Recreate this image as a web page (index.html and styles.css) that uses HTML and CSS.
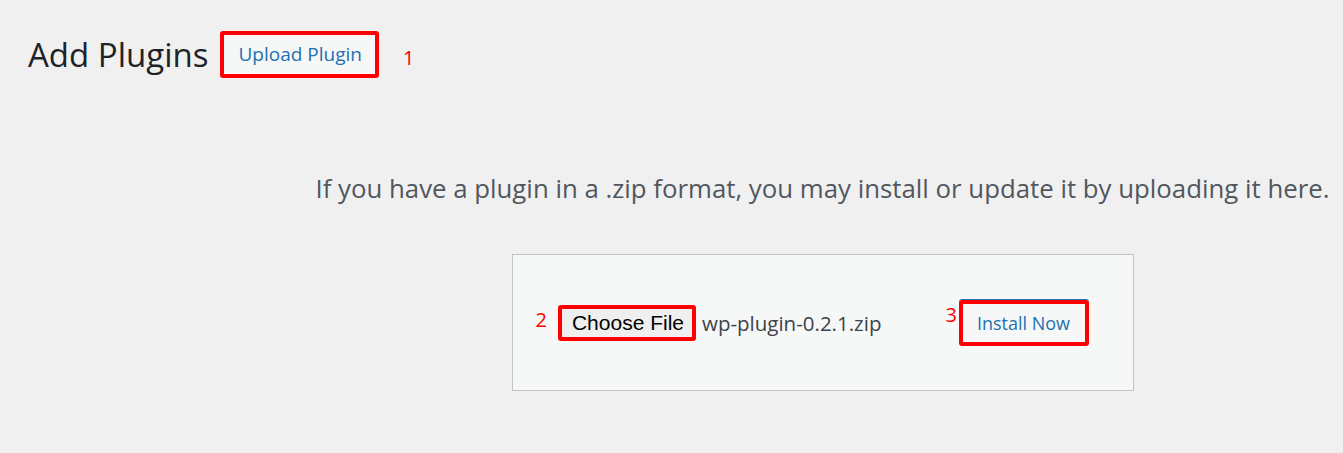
FILE: index.html
```html
<!DOCTYPE html>
<html lang="en">
<head>
    <meta charset="UTF-8">
    <title>Add Plugins</title>
    <link rel="stylesheet" href="styles.css">
</head>
<body>
    <div class="wrap">
        <div class="page-header">
            <h1>Add Plugins</h1>
            <span class="mark mark-upload"><a class="page-title-action" href="#">Upload Plugin</a></span>
            <span class="step step-1">1</span>
        </div>

        <div class="upload-plugin">
            <p class="install-help">If you have a plugin in a .zip format, you may install or update it by uploading it here.</p>
            <form class="upload-form">
                <span class="step step-2">2</span>
                <span class="mark mark-file"><span class="file-btn">Choose File</span></span>
                <span class="file-name">wp-plugin-0.2.1.zip</span>
                <span class="step step-3">3</span>
                <span class="mark mark-install"><span class="install-btn">Install Now</span></span>
            </form>
        </div>
    </div>
</body>
</html>
```

FILE: styles.css
```css
body {
    margin: 0;
    background: #f0f0f1;
    font-family: "Open Sans", "Noto Sans", sans-serif;
    color: #3c434a;
}
.wrap {
    width: 1343px;
    height: 453px;
    overflow: hidden;
}
.page-header {
    display: flex;
    align-items: center;
    padding: 31px 0 0 28px;
}
h1 {
    margin: 0 12px 0 0;
    font-size: 33px;
    font-weight: 400;
    color: #1d2327;
    line-height: 47px;
}
.mark {
    display: inline-flex;
    border: 4px solid #ff0000;
    border-radius: 3px;
}
.page-title-action {
    display: block;
    padding: 0 13px 0 14px;
    line-height: 39px;
    font-size: 19px;
    color: #2271b1;
    text-decoration: none;
    background: #f6f7f7;
}
.step {
    color: #ff0000;
    font-family: "Open Sans", sans-serif;
    font-size: 20px;
    line-height: 1;
}
.step-1 {
    margin: 6px 0 0 24px;
}
.upload-plugin {
    display: flex;
    flex-direction: column;
    align-items: center;
    padding-left: 302px;
    margin-top: 92px;
}
.install-help {
    margin: 0 0 48px;
    font-size: 25.8px;
    color: #50575e;
    line-height: 36px;
}
.upload-form {
    display: flex;
    align-items: center;
    width: 622px;
    height: 137px;
    box-sizing: border-box;
    padding: 0 0 0 23px;
    border: 1px solid #c3c4c7;
    background: #f6f7f7;
}
.step-2 {
    margin: 0 11px 6px 0;
}
.file-btn {
    display: block;
    padding: 0 8px 0 10px;
    line-height: 28px;
    font-family: "Liberation Sans", Arial, sans-serif;
    font-size: 21px;
    color: #000;
    background: #efefef;
}
.file-name {
    margin-left: 6px;
    font-size: 20.5px;
    color: #3c434a;
}
.step-3 {
    margin: 0 2px 16px 64px;
}
.mark-install {
    box-shadow: 0 -1px 0 #2271b1;
}
.install-btn {
    display: block;
    padding: 0 15px 0 14px;
    line-height: 38px;
    font-size: 18px;
    color: #2271b1;
    background: #f6f7f7;
}
```
